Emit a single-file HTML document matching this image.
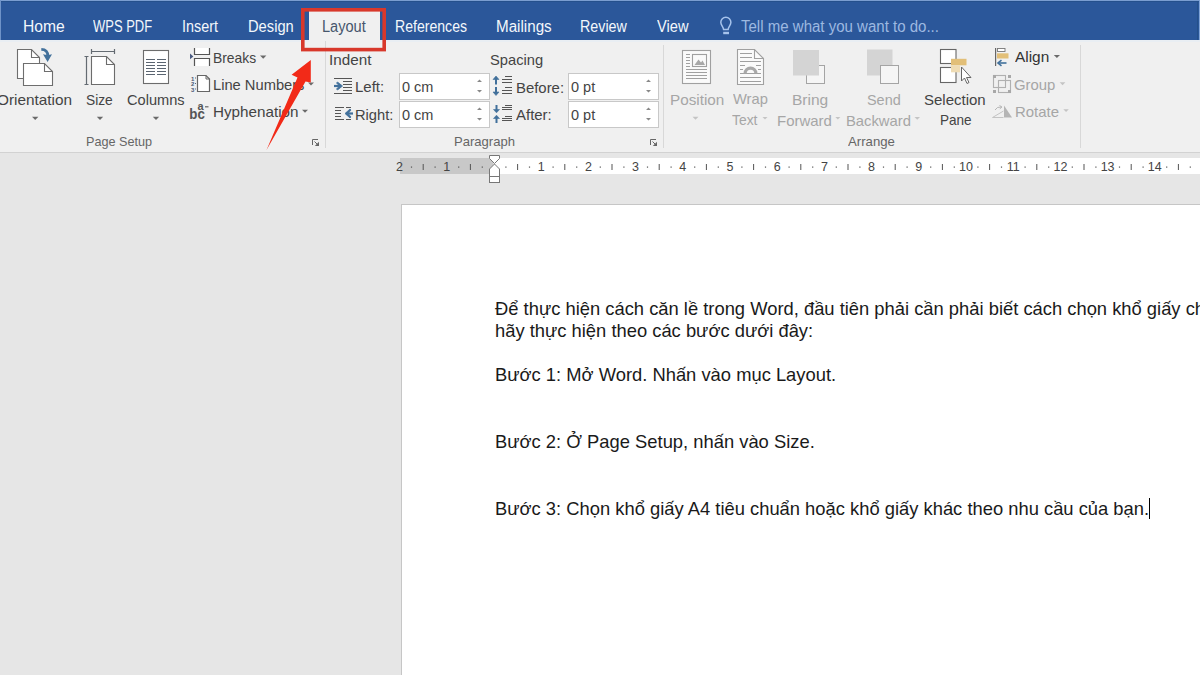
<!DOCTYPE html>
<html><head><meta charset="utf-8">
<style>
*{margin:0;padding:0;box-sizing:border-box}
html,body{width:1200px;height:675px;overflow:hidden;background:#e6e6e6;font-family:"Liberation Sans",sans-serif}
#bar{position:absolute;left:0;top:0;width:1200px;height:40px;background:#2b579a;border-top:1px solid #7a9dd0}
.tab{position:absolute;top:17px;font-size:16px;color:#f3f7fc;line-height:18px;white-space:nowrap}
#ribbon{position:absolute;left:0;top:40px;width:1200px;height:112px;background:#f0f0f0}
#rline{position:absolute;left:0;top:152px;width:1200px;height:1px;background:#d2d2d2}
.lbl{position:absolute;font-size:14.5px;color:#444;line-height:16px;white-space:nowrap}
.dis{color:#a6a6a6}
.glbl{position:absolute;font-size:13px;color:#666;line-height:15px;white-space:nowrap}
.box{position:absolute;background:#fff;border:1px solid #c8c8c8;width:91px;height:27px}
.L{transform-origin:0 0}
#page{position:absolute;left:401px;top:204px;width:800px;height:480px;background:#fff;border-left:1px solid #c6c6c6;border-top:1px solid #c6c6c6}
.t{position:absolute;left:495px;font-size:18.38px;color:#1a1a1a;white-space:nowrap;line-height:20px}
svg{position:absolute;left:0;top:0}
.rn{font-size:12.5px;fill:#444;text-anchor:middle;font-family:"Liberation Sans",sans-serif}
</style></head><body>
<div id="bar"></div>
<div id="ribbon"></div>
<div id="rline"></div>
<div style="position:absolute;left:0;top:40px;width:1200px;height:2px;background:#e9eef3"></div>
<div style="position:absolute;left:0;top:1px;width:1200px;height:1px;background:#25508c"></div>
<div style="position:absolute;left:309px;top:11px;width:71px;height:31px;background:#f0f0f0"></div>
<div class="box" style="left:399px;top:73px"></div>
<div class="box" style="left:399px;top:101px"></div>
<div class="box" style="left:568px;top:73px"></div>
<div class="box" style="left:568px;top:101px"></div>
<div class="tab L" style="left:23.00px;top:18.00px;transform:scaleX(0.9777);">Home</div>
<div class="tab L" style="left:93.35px;top:18.00px;transform:scaleX(0.8111);">WPS PDF</div>
<div class="tab L" style="left:181.50px;top:18.00px;transform:scaleX(0.8972);">Insert</div>
<div class="tab L" style="left:247.58px;top:18.00px;transform:scaleX(0.9193);">Design</div>
<div class="tab L" style="left:322.39px;top:18.00px;transform:scaleX(0.9109);color:#46566c">Layout</div>
<div class="tab L" style="left:395.22px;top:18.00px;transform:scaleX(0.8801);">References</div>
<div class="tab L" style="left:496.07px;top:18.00px;transform:scaleX(0.9488);">Mailings</div>
<div class="tab L" style="left:580.46px;top:18.00px;transform:scaleX(0.8929);">Review</div>
<div class="tab L" style="left:657.38px;top:18.00px;transform:scaleX(0.9144);">View</div>
<div class="tab L" style="left:740.62px;top:18.00px;transform:scaleX(0.9392);color:#9db9e1">Tell me what you want to do...</div>
<div class="lbl L" style="left:-3.00px;top:91.60px;transform:scaleX(1.0582);">Orientation</div>
<div class="lbl L" style="left:85.81px;top:91.60px;transform:scaleX(0.9493);">Size</div>
<div class="lbl L" style="left:126.64px;top:91.60px;transform:scaleX(1.0076);">Columns</div>
<div class="lbl L" style="left:212.75px;top:49.70px;transform:scaleX(0.9552);">Breaks</div>
<div class="lbl L" style="left:212.70px;top:76.80px;transform:scaleX(1.0133);">Line Numbers</div>
<div class="lbl L" style="left:212.63px;top:103.80px;transform:scaleX(1.0500);">Hyphenation</div>
<div class="glbl L" style="left:86.14px;top:134.00px;transform:scaleX(0.9730);">Page Setup</div>
<div class="lbl L" style="left:328.86px;top:51.50px;transform:scaleX(1.0507);">Indent</div>
<div class="lbl L" style="left:355.35px;top:79.40px;transform:scaleX(1.0316);">Left:</div>
<div class="lbl L" style="left:355.40px;top:106.80px;transform:scaleX(1.0119);">Right:</div>
<div class="lbl L" style="left:490.05px;top:51.50px;transform:scaleX(1.0129);">Spacing</div>
<div class="lbl L" style="left:516.00px;top:79.50px;transform:scaleX(1.0274);">Before:</div>
<div class="lbl L" style="left:516.17px;top:106.70px;transform:scaleX(1.0311);">After:</div>
<div class="glbl L" style="left:454.09px;top:134.00px;transform:scaleX(1.0037);">Paragraph</div>
<div class="lbl dis L" style="left:669.77px;top:91.60px;transform:scaleX(1.0537);">Position</div>
<div class="lbl dis L" style="left:732.78px;top:90.50px;transform:scaleX(1.0136);">Wrap</div>
<div class="lbl dis L" style="left:731.81px;top:112.00px;transform:scaleX(0.9561);">Text</div>
<div class="lbl dis L" style="left:791.73px;top:91.50px;transform:scaleX(1.0703);">Bring</div>
<div class="lbl dis L" style="left:777.04px;top:113.00px;transform:scaleX(1.0318);">Forward</div>
<div class="lbl dis L" style="left:867.03px;top:91.50px;transform:scaleX(0.9952);">Send</div>
<div class="lbl dis L" style="left:846.00px;top:113.00px;transform:scaleX(1.0197);">Backward</div>
<div class="lbl L" style="left:924.18px;top:91.50px;transform:scaleX(1.0345);">Selection</div>
<div class="lbl L" style="left:939.82px;top:112.00px;transform:scaleX(0.9348);">Pane</div>
<div class="lbl L" style="left:1015.22px;top:49.40px;transform:scaleX(1.0625);color:#333">Align</div>
<div class="lbl dis L" style="left:1014.18px;top:76.60px;transform:scaleX(1.0256);">Group</div>
<div class="lbl dis L" style="left:1015.07px;top:103.50px;transform:scaleX(1.0299);">Rotate</div>
<div class="glbl L" style="left:848.00px;top:134.00px;transform:scaleX(1.0136);">Arrange</div>
<div class="lbl L" style="left:401.90px;top:78.60px;">0 cm</div>
<div class="lbl L" style="left:401.90px;top:106.70px;">0 cm</div>
<div class="lbl L" style="left:571.00px;top:78.60px;">0 pt</div>
<div class="lbl L" style="left:571.00px;top:106.70px;">0 pt</div>
<div id="page"></div>
<div class="t" style="top:299px">Để thực hiện cách căn lề trong Word, đầu tiên phải cần phải biết cách chọn khổ giấy chuẩn</div>
<div class="t" style="top:321px">hãy thực hiện theo các bước dưới đây:</div>
<div class="t" style="top:365px">Bước 1: Mở Word. Nhấn vào mục Layout.</div>
<div class="t" style="top:432px">Bước 2: Ở Page Setup, nhấn vào Size.</div>
<div class="t" style="top:499px">Bước 3: Chọn khổ giấy A4 tiêu chuẩn hoặc khổ giấy khác theo nhu cầu của bạn.</div>

<svg width="1200" height="675" viewBox="0 0 1200 675">
<!-- bulb -->
<path d="M723.6,29.6 C723.4,26.8 720.8,25.2 720.8,22.3 A5.05,5.05 0 0 1 730.9,22.3 C730.9,25.2 728.3,26.8 728.1,29.6 Z" fill="none" stroke="#a6c3ec" stroke-width="1.5"/>
<rect x="723.2" y="31.8" width="5.8" height="2.4" fill="#a6c3ec"/>
<rect x="0" y="0" width="1" height="40" fill="#6f93c8"/>
<rect x="1199" y="0" width="1" height="40" fill="#7fa3d6"/>
<rect x="1197" y="1" width="1" height="39" fill="#24508a"/>
<!-- separators -->
<rect x="325" y="41" width="1" height="107" fill="#d8d8d8"/>
<rect x="663" y="45" width="1" height="103" fill="#d8d8d8"/>
<rect x="1080" y="45" width="1" height="103" fill="#d8d8d8"/>

<!-- Orientation icon -->
<g fill="none" stroke="#6e6e6e" stroke-width="1.1">
<path d="M23,78.5 H17.5 V49.5 H31.5 L39.5,57.5 V63" fill="#fff"/>
<path d="M31.5,49.5 V57.5 H39.5"/>
<path d="M23.5,63.5 H44.5 L52.5,71.5 V85.5 H23.5 Z" fill="#fff"/>
<path d="M44.5,63.5 V71.5 H52.5"/>
</g>
<path d="M41.3,49.4 Q48,49.6 47.8,56" fill="none" stroke="#43719b" stroke-width="2.8"/>
<path d="M43,54.2 Q47.5,55.2 52,54.2 L47.6,62 Z" fill="#43719b"/>

<!-- Size icon -->
<g fill="none" stroke="#646b72" stroke-width="1.2">
<path d="M91.5,51.5 H114.5 M91.5,49 V54 M114.5,49 V54"/>
<path d="M86.5,56.5 V84.5 M84.5,56.5 H88.5 M84.5,84.5 H88.5"/>
</g>
<g fill="none" stroke="#6c6c6c" stroke-width="1.1">
<path d="M91.5,56.5 H106.5 L114.5,64.5 V84.5 H91.5 Z" fill="#fff"/>
<path d="M106.5,56.5 V64.5 H114.5"/>
</g>
<!-- Columns icon -->
<rect x="143.5" y="50.5" width="25" height="33" fill="#fff" stroke="#6c6c6c" stroke-width="1.1"/>
<g stroke="#5a6470" stroke-width="1.2">
<path d="M146,59.5 H155 M157,59.5 H166 M146,62.5 H155 M157,62.5 H166 M146,65.5 H155 M157,65.5 H166 M146,68.5 H155 M157,68.5 H166 M146,71.5 H155 M157,71.5 H166 M146,74.5 H155 M157,74.5 H166"/>
</g>
<!-- Breaks -->
<path d="M194.5,48 V54.5 H209.5 V48" fill="#fff" stroke="#555" stroke-width="1.2"/>
<path d="M194.5,66 V58.5 H209.5 V66" fill="#fff" stroke="#555" stroke-width="1.2"/>
<path d="M190,53.6 L193.4,56.5 L190,59.3 Z" fill="#4a5b82"/>
<!-- Line numbers -->
<path d="M197.5,75.5 H206 L209.5,79 V91.5 H197.5 Z" fill="#fff" stroke="#666" stroke-width="1.2"/>
<path d="M206,75.5 V79 H209.5" fill="none" stroke="#666" stroke-width="1"/>
<text x="191" y="80.5" font-size="6" font-weight="bold" fill="#4a5870" font-family="Liberation Sans">1</text>
<text x="191" y="86" font-size="6" font-weight="bold" fill="#4a5870" font-family="Liberation Sans">2</text>
<text x="191" y="91.5" font-size="6" font-weight="bold" fill="#4a5870" font-family="Liberation Sans">3</text>
<rect x="195" y="77.5" width="1" height="1" fill="#667"/>
<rect x="195" y="83" width="1" height="1" fill="#667"/>
<rect x="195" y="88.5" width="1" height="1" fill="#667"/>
<!-- Hyphenation -->
<text x="197.5" y="109.8" font-size="11" font-weight="bold" fill="#555" font-family="Liberation Sans">a</text>
<rect x="205" y="106.2" width="3.5" height="1.2" fill="#666"/>
<text x="189.3" y="118.8" font-size="14.5" font-weight="bold" fill="#555" font-family="Liberation Sans" textLength="15.5" lengthAdjust="spacingAndGlyphs">bc</text>

<!-- dropdown arrows -->
<g fill="#6a6a6a">
<path d="M32,116.8 h6.4 l-3.2,3.2z"/>
<path d="M96.8,116.8 h6.4 l-3.2,3.2z"/>
<path d="M152.8,116.8 h6.4 l-3.2,3.2z"/>
<path d="M260,55.5 h6.4 l-3.2,3.2z"/>
<path d="M308,82.5 h6 l-3,3z"/>
<path d="M302,109.8 h6 l-3,3z"/>
<path d="M1053.8,55 h6.2 l-3.1,3.1z"/>
</g>
<g fill="#c4c4c4">
<path d="M692.5,116.8 h6 l-3,3z"/>
<path d="M762.5,117 h5 l-2.5,2.5z"/>
<path d="M835.3,117 h5 l-2.5,2.5z"/>
<path d="M914.5,117 h5.5 l-2.75,2.75z"/>
<path d="M1059.7,82.3 h5.7 l-2.85,2.85z"/>
<path d="M1063.3,109.2 h5.5 l-2.75,2.75z"/>
</g>
<!-- dialog launchers -->
<g fill="none" stroke="#666" stroke-width="1">
<path d="M312.5,145 V139.5 H318 M314.5,141.5 L317.5,144.5"/>
<path d="M650.5,145 V139.5 H656 M652.5,141.5 L655.5,144.5"/>
</g>
<g fill="#666">
<path d="M319,141.8 V146 H314.8 Z"/>
<path d="M657,141.8 V146 H652.8 Z"/>
</g>
<!-- Paragraph icons -->
<g stroke="#555" stroke-width="1.1">
<path d="M334,78.5 H352 M343,81.5 H352 M343,84.5 H352 M343,87.5 H352 M343,90.5 H352 M334,93.5 H352"/>
<path d="M335,107.5 H344 M346,107.5 H351 M335,110.5 H341 M335,113.5 H341 M335,116.5 H341 M335,119.5 H344 M346,119.5 H351"/>
<path d="M502,79.5 H512 M505,76.5 H512 M502,82.5 H512 M505,87.5 H512 M502,90.5 H512 M502,93.5 H512"/>
<path d="M505,105.5 H512 M502,107.5 H512 M502,109.5 H512 M505,116.5 H512 M502,118.5 H512 M502,120.5 H512"/>
</g>
<g fill="#41709b" stroke="#41709b">
<path d="M334,86 H340" stroke-width="2.2"/>
<path d="M337.5,82 L342.5,86 L337.5,90 L336.5,89 L339.5,86 L336.5,83 Z" stroke-width="0.8"/>
<path d="M346,113.5 H353" stroke-width="2.2"/>
<path d="M350,109 L345,113.5 L350,118 L351,117 L348,113.5 L351,110 Z" stroke-width="0.8"/>
<path d="M496,79 V84.5 M496,87 V93" stroke-width="2" fill="none"/>
<path d="M493,79.5 L496,76 L499,79.5 Z M493,92 L496,95.5 L499,92 Z" stroke-width="0.6"/>
<path d="M496.5,105 V110 M496.5,117 V123" stroke-width="2" fill="none"/>
<path d="M493.5,109.5 L496.5,112.8 L499.5,109.5 Z M493.5,118.5 L496.5,115.2 L499.5,118.5 Z" stroke-width="0.6"/>
</g>
<!-- spin buttons -->
<g fill="#888">
<path d="M477,82 h5 l-2.5,-2.5z M477,90 h5 l-2.5,2.5z"/>
<path d="M477,110 h5 l-2.5,-2.5z M477,118 h5 l-2.5,2.5z"/>
<path d="M646,82 h5 l-2.5,-2.5z M646,90 h5 l-2.5,2.5z"/>
<path d="M646,110 h5 l-2.5,-2.5z M646,118 h5 l-2.5,2.5z"/>
</g>

<!-- Position icon -->
<g fill="none" stroke="#a0a0a0" stroke-width="1.1">
<rect x="682.5" y="50.5" width="28" height="33" fill="#fafafa"/>
<rect x="692.5" y="54.5" width="14" height="12"/>
<path d="M686,54.5 H690 M686,57.5 H690 M686,60.5 H690 M686,63.5 H690 M686,66.5 H690 M686,69.5 H707 M686,72.5 H707 M686,75.5 H707 M686,78.5 H707"/>
</g>
<path d="M694.5,65 L698.5,59.5 L701,62.5 L702.5,60.5 L705,65 Z" fill="#a8a8a8"/>
<!-- Wrap icon -->
<g fill="none" stroke="#a0a0a0" stroke-width="1.1">
<path d="M737.5,49.5 H754.5 L763.5,58.5 V84.5 H737.5 Z" fill="#fafafa"/>
<path d="M754.5,49.5 V58.5 H763.5"/>
<path d="M740,53.5 H752 M740,57.5 H752 M740,61.5 H761 M740,65.5 H745 M756,65.5 H761 M740,69.5 H743 M758,69.5 H761 M740,73.5 H761 M740,77.5 H761 M740,81.5 H761" stroke-width="1"/>
</g>
<path d="M743.5,73.5 A7,7 0 0 1 757.5,73.5 H754.3 A3.8,3.8 0 0 0 746.7,73.5 Z" fill="#a8a8a8"/>
<!-- Bring forward -->
<rect x="806.5" y="65.5" width="18" height="18" fill="#f5f5f5" stroke="#a4a4a4" stroke-width="1"/>
<rect x="793" y="50" width="26" height="25.5" fill="#d4d4d4"/>
<!-- Send backward -->
<rect x="867" y="49.5" width="25.5" height="26" fill="#d4d4d4"/>
<rect x="880.5" y="65.5" width="18" height="18" fill="#f5f5f5" stroke="#a4a4a4" stroke-width="1"/>
<!-- Selection pane -->
<rect x="940.5" y="49.5" width="15.5" height="14" fill="#fff" stroke="#666" stroke-width="1.1"/>
<rect x="940.5" y="67.5" width="15.5" height="15" fill="#fff" stroke="#666" stroke-width="1.1"/>
<rect x="951" y="58.8" width="15.5" height="6.5" fill="#e2bf78"/>
<rect x="951" y="65.3" width="9" height="7" fill="#efdcb4"/>
<path d="M961.5,67 V81 L964.5,78 L967,83.5 L969,82.5 L966.5,77.5 L971,77.5 Z" fill="#fff" stroke="#666" stroke-width="1"/>
<!-- Align -->
<rect x="995" y="48" width="1.2" height="18" fill="#666"/>
<rect x="997.5" y="48.5" width="7.5" height="3" fill="#fff" stroke="#777" stroke-width="0.9"/>
<rect x="997" y="53.3" width="11.5" height="5.2" fill="#e2bf78"/>
<path d="M999,63 H1006.5" stroke="#41709b" stroke-width="1.6"/>
<path d="M1001.5,60.2 L998,63 L1001.5,65.8" fill="none" stroke="#41709b" stroke-width="1.6"/>
<!-- Group -->
<g fill="none" stroke="#b0b0b0" stroke-width="1.1">
<rect x="993.5" y="75.5" width="12" height="12"/>
<rect x="998.5" y="80.5" width="12" height="12"/>
</g>
<g fill="#a8a8a8">
<rect x="993" y="75" width="3" height="3"/><rect x="1008" y="75" width="3" height="3"/>
<rect x="993" y="90" width="3" height="3"/><rect x="1008" y="90" width="3" height="3"/>
</g>
<!-- Rotate -->
<path d="M1004,117.5 L1012,117.5 L1004,105.5 Z" fill="#b5b5b5"/>
<path d="M992.5,117.5 L1003.5,117.5 M992.5,117.5 L1003.5,111" fill="none" stroke="#c4c4c4" stroke-width="1"/>
<path d="M995,110 Q997,106.5 1001,107" fill="none" stroke="#b5b5b5" stroke-width="1"/>
<path d="M999.5,105.5 L1002,107 L999.8,108.8" fill="none" stroke="#b5b5b5" stroke-width="1"/>

<!-- ruler -->
<rect x="400" y="158" width="800" height="16" fill="#fff"/>
<rect x="400" y="158" width="93.5" height="16" fill="#c8c8c8"/>
<text x="399.6" y="170.6" class="rn">2</text>
<rect x="410.9" y="166.5" width="1.2" height="1.2" fill="#555"/>
<rect x="422.7" y="164" width="1" height="6" fill="#555"/>
<rect x="434.5" y="166.5" width="1.2" height="1.2" fill="#555"/>
<text x="446.8" y="170.6" class="rn">1</text>
<rect x="458.1" y="166.5" width="1.2" height="1.2" fill="#555"/>
<rect x="469.9" y="164" width="1" height="6" fill="#555"/>
<rect x="481.7" y="166.5" width="1.2" height="1.2" fill="#555"/>
<rect x="505.3" y="166.5" width="1.2" height="1.2" fill="#555"/>
<rect x="517.1" y="164" width="1" height="6" fill="#555"/>
<rect x="528.9" y="166.5" width="1.2" height="1.2" fill="#555"/>
<text x="541.2" y="170.6" class="rn">1</text>
<rect x="552.5" y="166.5" width="1.2" height="1.2" fill="#555"/>
<rect x="564.3" y="164" width="1" height="6" fill="#555"/>
<rect x="576.1" y="166.5" width="1.2" height="1.2" fill="#555"/>
<text x="588.4" y="170.6" class="rn">2</text>
<rect x="599.7" y="166.5" width="1.2" height="1.2" fill="#555"/>
<rect x="611.5" y="164" width="1" height="6" fill="#555"/>
<rect x="623.3" y="166.5" width="1.2" height="1.2" fill="#555"/>
<text x="635.6" y="170.6" class="rn">3</text>
<rect x="646.9" y="166.5" width="1.2" height="1.2" fill="#555"/>
<rect x="658.7" y="164" width="1" height="6" fill="#555"/>
<rect x="670.5" y="166.5" width="1.2" height="1.2" fill="#555"/>
<text x="682.8" y="170.6" class="rn">4</text>
<rect x="694.1" y="166.5" width="1.2" height="1.2" fill="#555"/>
<rect x="705.9" y="164" width="1" height="6" fill="#555"/>
<rect x="717.7" y="166.5" width="1.2" height="1.2" fill="#555"/>
<text x="730.0" y="170.6" class="rn">5</text>
<rect x="741.3" y="166.5" width="1.2" height="1.2" fill="#555"/>
<rect x="753.1" y="164" width="1" height="6" fill="#555"/>
<rect x="764.9" y="166.5" width="1.2" height="1.2" fill="#555"/>
<text x="777.2" y="170.6" class="rn">6</text>
<rect x="788.5" y="166.5" width="1.2" height="1.2" fill="#555"/>
<rect x="800.3" y="164" width="1" height="6" fill="#555"/>
<rect x="812.1" y="166.5" width="1.2" height="1.2" fill="#555"/>
<text x="824.4" y="170.6" class="rn">7</text>
<rect x="835.7" y="166.5" width="1.2" height="1.2" fill="#555"/>
<rect x="847.5" y="164" width="1" height="6" fill="#555"/>
<rect x="859.3" y="166.5" width="1.2" height="1.2" fill="#555"/>
<text x="871.6" y="170.6" class="rn">8</text>
<rect x="882.9" y="166.5" width="1.2" height="1.2" fill="#555"/>
<rect x="894.7" y="164" width="1" height="6" fill="#555"/>
<rect x="906.5" y="166.5" width="1.2" height="1.2" fill="#555"/>
<text x="918.8" y="170.6" class="rn">9</text>
<rect x="930.1" y="166.5" width="1.2" height="1.2" fill="#555"/>
<rect x="941.9" y="164" width="1" height="6" fill="#555"/>
<rect x="953.7" y="166.5" width="1.2" height="1.2" fill="#555"/>
<text x="966.0" y="170.6" class="rn">10</text>
<rect x="977.3" y="166.5" width="1.2" height="1.2" fill="#555"/>
<rect x="989.1" y="164" width="1" height="6" fill="#555"/>
<rect x="1000.9" y="166.5" width="1.2" height="1.2" fill="#555"/>
<text x="1013.2" y="170.6" class="rn">11</text>
<rect x="1024.5" y="166.5" width="1.2" height="1.2" fill="#555"/>
<rect x="1036.3" y="164" width="1" height="6" fill="#555"/>
<rect x="1048.1" y="166.5" width="1.2" height="1.2" fill="#555"/>
<text x="1060.4" y="170.6" class="rn">12</text>
<rect x="1071.7" y="166.5" width="1.2" height="1.2" fill="#555"/>
<rect x="1083.5" y="164" width="1" height="6" fill="#555"/>
<rect x="1095.3" y="166.5" width="1.2" height="1.2" fill="#555"/>
<text x="1107.6" y="170.6" class="rn">13</text>
<rect x="1118.9" y="166.5" width="1.2" height="1.2" fill="#555"/>
<rect x="1130.7" y="164" width="1" height="6" fill="#555"/>
<rect x="1142.5" y="166.5" width="1.2" height="1.2" fill="#555"/>
<text x="1154.8" y="170.6" class="rn">14</text>
<rect x="1166.1" y="166.5" width="1.2" height="1.2" fill="#555"/>
<rect x="1177.9" y="164" width="1" height="6" fill="#555"/>
<rect x="1189.7" y="166.5" width="1.2" height="1.2" fill="#555"/>
<!-- indent markers -->
<path d="M489.5,155.5 H499.5 V158.5 L494.5,163.5 L489.5,158.5 Z" fill="#fff" stroke="#777" stroke-width="1"/>
<path d="M494.5,164 L499.5,169 V176.5 H489.5 V169 Z" fill="#fff" stroke="#777" stroke-width="1"/>
<rect x="489.5" y="176.5" width="10" height="6" fill="#fff" stroke="#777" stroke-width="1"/>

<!-- cursor -->
<rect x="1149" y="498" width="1" height="21" fill="#000"/>

<!-- red box -->
<rect x="302.8" y="9.8" width="81.4" height="39.8" fill="none" stroke="#d8382b" stroke-width="3.6"/>
<!-- red arrow -->
<path d="M310.8,60 L291.6,74.8 L297.5,77.5 L266.5,150 L305.5,81.5 L310.8,82.5 Z" fill="#f22a18"/>
</svg>
</body></html>
